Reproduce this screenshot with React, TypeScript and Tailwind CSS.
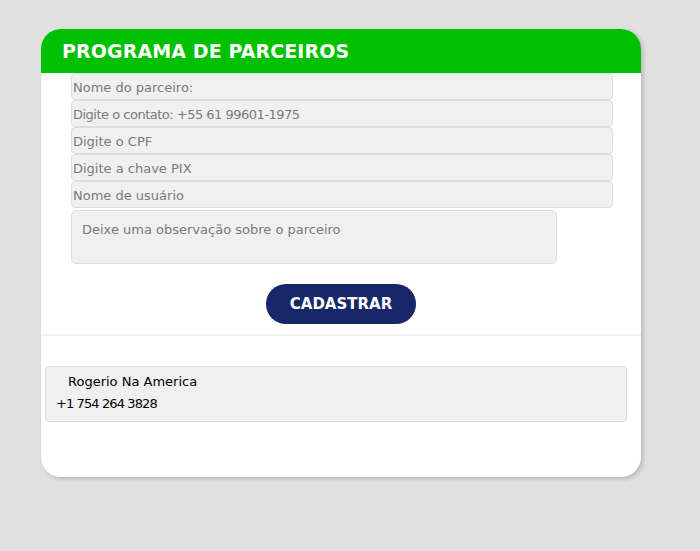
import React from "react";

const fields: { text: string; cls: string }[] = [
  { text: "Nome do parceiro:", cls: "tracking-[0px]" },
  { text: "Digite o contato: +55 61 99601-1975", cls: "tracking-[-0.5px]" },
  { text: "Digite o CPF", cls: "tracking-[0px]" },
  { text: "Digite a chave PIX", cls: "tracking-[0px]" },
  { text: "Nome de usuário", cls: "tracking-[0px]" },
];

export default function App() {
  return (
    <div
      className="min-h-[551px] w-full bg-[#e0e0e0] pt-[29px] pl-[41px]"
      style={{ fontFamily: '"DejaVu Sans", "Open Sans", sans-serif' }}
    >
      <div className="relative w-[600px] h-[448px] rounded-[20px] bg-white shadow-[2px_2px_4px_rgba(0,0,0,0.18)] overflow-hidden flex flex-col">
        <div className="h-[44px] bg-[#00c000] flex items-center pl-[21px]">
          <h1 className="text-white font-bold text-[19px] tracking-[0.1px]">
            PROGRAMA DE PARCEIROS
          </h1>
        </div>

        <form className="flex flex-col pl-[30px]">
          {fields.map((f) => (
            <input
              key={f.text}
              placeholder={f.text}
              className={`w-[542px] h-[27px] bg-[#f0f0f0] border border-[#dddddd] rounded-[4px] pl-[1px] pt-[2px] text-[13px] text-[#333] placeholder:text-[#7a7a7a] outline-none ${f.cls}`}
            />
          ))}
          <textarea
            placeholder="Deixe uma observação sobre o parceiro"
            className="mt-[2px] w-[486px] h-[54px] bg-[#f0f0f0] border border-[#dddddd] rounded-[5px] px-[10px] py-[11px] text-[13px] leading-[16px] placeholder:text-[#7a7a7a] outline-none resize-none"
          />
          <div className="flex justify-center pr-[30px] mt-[20px]">
            <button
              type="button"
              className="w-[150px] h-[40px] rounded-full bg-[#172768] text-white font-bold text-[15px] pt-[1px]"
            >
              CADASTRAR
            </button>
          </div>
        </form>

        <div className="mt-[10px] h-[2px] bg-[#f0f0f0]" />

        <div className="pl-[4px] pt-[30px]">
          <div className="w-[582px] h-[56px] bg-[#f0f0f0] border border-[#dddddd] rounded-[4px] pl-[10px] pt-[6px]">
            <div className="pl-[12px] text-[13px] text-black leading-[18px]">
              Rogerio Na America
            </div>
            <div className="mt-[4px] text-[13px] text-black leading-[18px] tracking-[-0.9px]">
              +1 754 264 3828
            </div>
          </div>
        </div>
      </div>
    </div>
  );
}
